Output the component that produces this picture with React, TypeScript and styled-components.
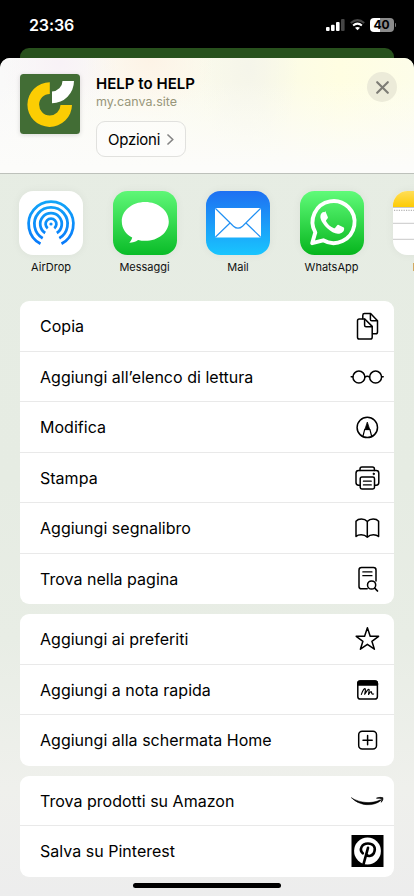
import React from "react";
import styled, { createGlobalStyle } from "styled-components";

const GlobalStyle = createGlobalStyle`
  * { box-sizing: border-box; }
  html, body { margin: 0; padding: 0; background: #000; overflow: hidden; }
  body { font-family: Inter, "Liberation Sans", sans-serif; color: #000; }
  button { font: inherit; color: inherit; }
`;

const Screen = styled.div`
  width: 414px;
  height: 896px;
  overflow: hidden;
  background: #000;
  display: flex;
  flex-direction: column;
`;

const StatusBar = styled.div`
  height: 48px;
  flex: none;
  display: flex;
  align-items: center;
  justify-content: space-between;
  padding: 2px 18px 0 29px;
  color: #fff;
`;

const Clock = styled.div`
  font-size: 16px;
  font-weight: 600;
  line-height: 20px;
  letter-spacing: -0.1px;
`;

const StatusIcons = styled.div`
  display: flex;
  align-items: center;
  gap: 5px;
`;

const Battery = styled.div`
  display: flex;
  align-items: center;
  gap: 1px;
`;

const BatteryBody = styled.div<{ $level: number }>`
  width: 24px;
  height: 14px;
  border-radius: 4px;
  background: linear-gradient(90deg, #fff ${(p) => p.$level}%, #8b8b8b ${(p) => p.$level}%);
  color: #000;
  font-size: 12px;
  font-weight: 700;
  line-height: 14px;
  text-align: center;
`;

const BatteryCap = styled.div`
  width: 1.4px;
  height: 4px;
  border-radius: 0 2px 2px 0;
  background: #777;
`;

const PageBehind = styled.div`
  height: 10px;
  flex: none;
  margin: 0 20px;
  border-radius: 9px 9px 0 0;
  background: #28511d;
`;

const Sheet = styled.div`
  flex: 1;
  display: flex;
  flex-direction: column;
  border-radius: 10px 10px 0 0;
  overflow: hidden;
  background: linear-gradient(180deg, #e7ede4 0, #e6ece3 420px, #e8ede5 580px, #eff0ec 730px, #ededed 838px);
`;

const Header = styled.header`
  height: 116px;
  flex: none;
  display: flex;
  align-items: flex-start;
  padding: 16px 17px 0 20px;
  border-bottom: 1px solid #bdc1bb;
  background:
    linear-gradient(180deg, rgba(252, 252, 250, 0) 20%, #fcfcfa 95%),
    radial-gradient(circle at 150px 0, #fdf3e6 0, rgba(253, 243, 230, 0) 65px),
    radial-gradient(circle at 60px 5px, #f8f2f7 0, rgba(248, 242, 247, 0) 60px),
    radial-gradient(ellipse 50px 90px at 248px 10px, #f5f5ea 0, rgba(245, 245, 234, 0) 100%),
    linear-gradient(90deg, #f9f9f9 0, #fcfbf2 35%, #fafae9 60%, #fffee2 82%, #fdfde9 100%);
`;

const SiteIcon = styled.svg`
  width: 60px;
  height: 60px;
  flex: none;
  border-radius: 3.5px;
  box-shadow: 0 1px 5px rgba(0, 0, 0, 0.14);
`;

const SiteInfo = styled.div`
  flex: 1;
  margin-left: 16px;
`;

const SiteTitle = styled.h1`
  margin: 0;
  font-size: 15px;
  font-weight: 600;
  line-height: 19px;
  letter-spacing: 0.02px;
`;

const SiteUrl = styled.div`
  font-size: 12.5px;
  line-height: 18px;
  color: #98967a;
  letter-spacing: 0.03px;
`;

const OptionsButton = styled.button`
  margin-top: 10px;
  width: 89.5px;
  height: 36px;
  padding: 0 0 0 11px;
  display: flex;
  align-items: center;
  gap: 7px;
  border: 1px solid #e1e1de;
  border-radius: 9px;
  background: rgba(255, 255, 255, 0.4);
  font-size: 15px;
  letter-spacing: -0.25px;
`;

const CloseButton = styled.button`
  width: 30px;
  height: 30px;
  margin-top: -2px;
  padding: 0;
  border: 0;
  border-radius: 50%;
  background: #ecebd9;
  display: grid;
  place-items: center;
`;

const AppStrip = styled.div`
  flex: none;
  height: 127px;
  display: flex;
  padding: 17px 0 0 4.3px;
  overflow: hidden;
`;

const AppItem = styled.div`
  flex: 0 0 93.5px;
  display: flex;
  flex-direction: column;
  align-items: center;
`;

const AppIcon = styled.svg`
  width: 64px;
  height: 64px;
  border-radius: 14.5px;
  box-shadow: 0 0 10px rgba(0, 0, 0, 0.05);
`;

const AppLabel = styled.div`
  margin-top: 5px;
  font-size: 11px;
  line-height: 14px;
  color: #111;
`;

const ActionList = styled.ul`
  flex: none;
  list-style: none;
  margin: 0 20px 10px;
  padding: 0;
  border-radius: 9px;
  overflow: hidden;
  background: #fff;
`;

const ActionRow = styled.li`
  height: 50.5px;
  padding: 0 10px 0 20px;
  display: flex;
  align-items: center;
  justify-content: space-between;
  &:not(:last-child) { box-shadow: inset 0 -1px 0 #e9e9e9; }
`;

const ActionLabel = styled.span`
  font-size: 16px;
  line-height: 20px;
  white-space: nowrap;
  letter-spacing: 0.02px;
`;

const ActionIcon = styled.svg`
  width: 34px;
  height: 34px;
  flex: none;
  fill: none;
  stroke: #000;
  stroke-width: 1.5;
  stroke-linecap: round;
  stroke-linejoin: round;
`;

const HomeIndicator = styled.div`
  flex: none;
  align-self: center;
  width: 148px;
  height: 5px;
  margin-top: -4px;
  border-radius: 3px;
  background: #000;
`;

const apps = [
  {
    name: "AirDrop",
    art: (
      <>
        <defs>
          <linearGradient id="air" x1="0" y1="10" x2="0" y2="54" gradientUnits="userSpaceOnUse">
            <stop offset="0" stopColor="#12a5f8" />
            <stop offset="1" stopColor="#0879fb" />
          </linearGradient>
        </defs>
        <rect width="64" height="64" fill="#fff" />
        <circle cx="32" cy="33" r="1.6" fill="#0e8ffa" />
        <g fill="none" stroke="url(#air)" strokeWidth="2.75">
          <path d="M28.7 37.3A5.4 5.4 0 1 1 35.3 37.3" />
          <path d="M26.2 42A10.8 10.8 0 1 1 37.8 42" />
          <path d="M23.7 47.3A16.6 16.6 0 1 1 40.3 47.3" />
          <path d="M21.5 52.8A22.4 22.4 0 1 1 42.5 52.8" />
        </g>
      </>
    ),
  },
  {
    name: "Messaggi",
    art: (
      <>
        <defs>
          <linearGradient id="msg" x1="0" y1="0" x2="0" y2="1">
            <stop offset="0" stopColor="#5ff777" />
            <stop offset="1" stopColor="#0abc28" />
          </linearGradient>
        </defs>
        <rect width="64" height="64" fill="url(#msg)" />
        <path
          d="M32.2 11C19.1 11 8.8 19.6 8.8 30.4c0 6.9 4.1 12.8 10.4 16.2-.5 2-1.4 3.7-2.9 5.2 3.3-.2 6.4-1.2 8.8-2.9 2.2.6 4.6.9 7.1.9 13 0 23.6-8.6 23.6-19.4S45.2 11 32.2 11z"
          fill="#fff"
        />
      </>
    ),
  },
  {
    name: "Mail",
    art: (
      <>
        <defs>
          <linearGradient id="mail" x1="0" y1="0" x2="0" y2="1">
            <stop offset="0" stopColor="#1e70f2" />
            <stop offset="1" stopColor="#19c5fe" />
          </linearGradient>
        </defs>
        <rect width="64" height="64" fill="url(#mail)" />
        <rect x="9" y="17" width="46" height="29.5" rx="1.5" fill="#fff" />
        <g fill="none" stroke="#2291f3" strokeWidth="1.2">
          <path d="M9.5 17.5 27.5 35.2Q32 39.2 36.5 35.2L54.5 17.5" />
          <path d="M9.5 46 24 32M54.5 46 40 32" />
        </g>
      </>
    ),
  },
  {
    name: "WhatsApp",
    art: (
      <>
        <defs>
          <linearGradient id="wa" x1="0" y1="0" x2="0" y2="1">
            <stop offset="0" stopColor="#60fb79" />
            <stop offset="1" stopColor="#06b51d" />
          </linearGradient>
        </defs>
        <rect width="64" height="64" fill="url(#wa)" />
        <path
          d="M12.2 52.2 15.3 41.4A21 21 0 1 1 23.2 49.3z"
          fill="none"
          stroke="#fff"
          strokeWidth="3.9"
          strokeLinejoin="round"
        />
        <path
          d="M24.7 21.2c-.5-.5-1.8-.4-2.5.3-1.3 1.2-2 2.8-1.8 5 .4 3.4 3.7 7.8 7.1 11 3.3 3 7.4 5.4 10.8 5.2 2.4-.1 5.3-1.7 5.7-3.8.2-1 .3-1.9-.2-2.3l-5.2-2.6c-.7-.3-1.1-.1-1.6.4l-2 2.5c-.4.5-.8.5-1.5.2-3.4-1.5-5.9-4-7.4-6.8-.3-.5-.2-.9.2-1.3l1.4-1.8c.3-.5.3-.8.1-1.3l-2.3-5.3c-.2-.4-.5-.5-.8.6z"
          fill="#fff"
        />
      </>
    ),
  },
  {
    name: "Note",
    art: (
      <>
        <defs>
          <linearGradient id="note" x1="0" y1="0" x2="0" y2="1">
            <stop offset="0" stopColor="#ffde59" />
            <stop offset="1" stopColor="#fdcb05" />
          </linearGradient>
        </defs>
        <rect width="64" height="64" fill="#fff" />
        <rect width="64" height="16" fill="url(#note)" />
        <path d="M0 16.5H64M0 32.3H64M0 48.3H64" stroke="#c9c9c9" strokeWidth="1" />
        <path d="M1 19.3H64" stroke="#b5b5b5" strokeWidth="1.2" strokeDasharray="1.2 1.2" />
      </>
    ),
  },
];

interface Action {
  label: string;
  icon: React.ReactNode;
}

const actionGroups: Action[][] = [
  [
    {
      label: "Copia",
      icon: (
        <>
          <path d="M-4.2-7.2V-10.8Q-4.2-12.5-2.5-12.5H3.6L10.5-5.2V6Q10.5 7.8 8.8 7.8H5.6" />
          <path d="M3.4-12.3V-6.6Q3.4-5.2 4.8-5.2H10.2" />
          <path d="M-7.7-7H-2.2L5.2.4V11.2Q5.2 13 3.4 13H-7.7Q-9.5 13-9.5 11.2V-5.2Q-9.5-7-7.7-7z" />
          <path d="M-2.4-6.8V-.8Q-2.4.7-1 .7H5" />
        </>
      ),
    },
    {
      label: "Aggiungi all’elenco di lettura",
      icon: (
        <>
          <circle cx="-8.1" cy=".1" r="6" />
          <circle cx="8.6" cy=".1" r="6" />
          <path d="M-2.1 0Q.3-1.4 2.6 0M-14.1-.2H-15.8M14.6-.2H16.2" />
        </>
      ),
    },
    {
      label: "Modifica",
      icon: (
        <>
          <circle cx=".3" cy=".4" r="10.2" />
          <path d="M-4.1 9.5-2.3 2.3H2.9L4.7 9.5" strokeWidth="1.2" />
          <path d="M-2.1 2.3.3-5 2.7 2.3z" fill="#000" strokeWidth=".7" />
        </>
      ),
    },
    {
      label: "Stampa",
      icon: (
        <>
          <path d="M-7-7.5V-9Q-7-11-5-11H5.4Q7.4-11 7.4-9V-7.5" />
          <path d="M-7 7.2H-8.4Q-11 7.2-11 4.6V-4.8Q-11-7.5-8.4-7.5H9.2Q11.8-7.5 11.8-4.8V4.6Q11.8 7.2 9.2 7.2H7.6" />
          <rect x="-6.8" y="-.9" width="14.3" height="11.9" rx="1.7" />
          <path d="M-3.6 3.2H4.3M-3.6 6.9H4.3" strokeWidth="1.2" />
          <circle cx="6.7" cy="-4.1" r=".8" fill="#000" strokeWidth=".7" />
        </>
      ),
    },
    {
      label: "Aggiungi segnalibro",
      icon: (
        <path d="M.3-6.6Q-1.8-9-5.6-9-9.1-9-11-6.8V8.5Q-9.2 6.8-5.8 6.8-2 6.8.3 9.2 2.6 6.8 6.4 6.8 9.6 6.8 11.6 8.5V-6.8Q9.7-9 6.2-9 2.4-9 .3-6.6zV9.2" />
      ),
    },
    {
      label: "Trova nella pagina",
      icon: (
        <>
          <path d="M.2 9.8H-5.5Q-8 9.8-8 7.4V-8.9Q-8-11.4-5.5-11.4H6.5Q9-11.4 9-8.9V2.1" />
          <path d="M-4.2-7.1H5M-4.2-3.3H5" strokeWidth="1.2" />
          <circle cx="4.6" cy="6" r="4.1" />
          <path d="M7.7 9.1 10.5 12" strokeWidth="1.7" />
        </>
      ),
    },
  ],
  [
    {
      label: "Aggiungi ai preferiti",
      icon: (
        <path d="M.4-11.2 3.2-2.7H11.6L4.9 2.3 7.4 10.2.4 5.3-6.6 10.2-4.1 2.3-10.8-2.7H-2.4z" />
      ),
    },
    {
      label: "Aggiungi a nota rapida",
      icon: (
        <>
          <rect x="-9.2" y="-9" width="19.6" height="18" rx="2.6" />
          <path d="M-9.2-4.9V-6.6Q-9.2-9-6.6-9H7.8Q10.4-9 10.4-6.6V-4.9z" fill="#000" />
          <path
            d="M-5.6 4.4C-4-.2-2.6-1.6-1.8-1.3-1 .1-2.2 2.6-2.3 4.3-.3.9 1.3-1 2-.6 2.7.3 1.5 2.6 1.6 4.4 2.8 2.4 3.7 1.4 4.3 1.7 4.9 2.6 4.2 4.6 6.6 4"
            strokeWidth="1.15"
          />
        </>
      ),
    },
    {
      label: "Aggiungi alla schermata Home",
      icon: (
        <>
          <rect x="-8.3" y="-8.7" width="17.8" height="17.8" rx="3.5" />
          <path d="M-4 .2H5.2M.6-4.4V4.8" />
        </>
      ),
    },
  ],
  [
    {
      label: "Trova prodotti su Amazon",
      icon: (
        <>
          <path d="M-15.4-3.1C-7 2.2 5 3.2 13.3-1.2L14-.6C6 6-7.5 5-15.4-3.1z" fill="#000" strokeWidth=".5" />
          <path d="M9.9-2.9Q13.3-4.3 15.9-3.3 16.4-1.4 14.3 1.3 15-.8 14.6-2.2 12.8-2.9 9.9-2.9z" fill="#000" strokeWidth=".7" />
        </>
      ),
    },
    {
      label: "Salva su Pinterest",
      icon: (
        <>
          <rect x="-15.5" y="-16" width="32" height="32" fill="#000" stroke="none" />
          <circle cx=".5" cy="0" r="13.4" fill="#fff" stroke="none" />
          <path d="M-4.2 2.3C-8.2-1.4-5.2-7.5 1-7.5 6.2-7.5 8.7-4.2 7.5.2 6.2 5.6.7 6.3-.6 3M1-3.2-3.4 12.9" strokeWidth="2.6" />
        </>
      ),
    },
  ],
];

export default function App() {
  return (
    <>
      <GlobalStyle />
      <Screen>
        <StatusBar>
          <Clock>23:36</Clock>
          <StatusIcons>
            <svg width="19" height="12" viewBox="0 0 19 12">
              <rect x="0" y="8" width="3.6" height="4" rx="1" fill="#fff" />
              <rect x="5" y="5.8" width="3.6" height="6.2" rx="1" fill="#fff" />
              <rect x="10" y="3" width="3.6" height="9" rx="1" fill="#fff" />
              <rect x="15" y="0" width="3.6" height="12" rx="1" fill="#454545" />
            </svg>
            <svg width="15" height="12" viewBox="0 0 15 12" fill="none" strokeWidth="2">
              <path d="M.8 4Q7.5-1.8 14.2 4" stroke="#464646" />
              <path d="M3.1 6.5Q7.5 2.8 11.9 6.5" stroke="#fff" />
              <path d="M7.5 11.3 5 8.8Q7.5 7 10 8.8z" fill="#fff" />
            </svg>
            <Battery>
              <BatteryBody $level={40}>40</BatteryBody>
              <BatteryCap />
            </Battery>
          </StatusIcons>
        </StatusBar>
        <PageBehind />
        <Sheet>
          <Header>
            <SiteIcon viewBox="0 0 60 60">
              <rect width="60" height="60" fill="#426d35" />
              <path
                d="M29.8 8.3A22.3 22.3 0 1 0 52 31H40.5A10.7 10.7 0 1 1 29.8 20z"
                fill="#fccd03"
              />
              <path d="M42.5 7H54A22.3 22.3 0 0 1 32 29.3V17.5A10.7 10.7 0 0 0 42.5 7z" fill="#fff" />
            </SiteIcon>
            <SiteInfo>
              <SiteTitle>HELP to HELP</SiteTitle>
              <SiteUrl>my.canva.site</SiteUrl>
              <OptionsButton>
                Opzioni
                <svg width="7" height="11" viewBox="0 0 7 11" fill="none" stroke="#858585" strokeWidth="1.7" strokeLinecap="round" strokeLinejoin="round">
                  <path d="M1 1 5.8 5.5 1 10" />
                </svg>
              </OptionsButton>
            </SiteInfo>
            <CloseButton aria-label="Chiudi">
              <svg width="13" height="13" viewBox="0 0 13 13" stroke="#7d7c75" strokeWidth="2.1" strokeLinecap="round">
                <path d="M1.2 1.2 11.8 11.8M11.8 1.2 1.2 11.8" />
              </svg>
            </CloseButton>
          </Header>
          <AppStrip>
            {apps.map((app) => (
              <AppItem key={app.name}>
                <AppIcon viewBox="0 0 64 64">{app.art}</AppIcon>
                <AppLabel>{app.name}</AppLabel>
              </AppItem>
            ))}
          </AppStrip>
          {actionGroups.map((group, i) => (
            <ActionList key={i}>
              {group.map((action) => (
                <ActionRow key={action.label}>
                  <ActionLabel>{action.label}</ActionLabel>
                  <ActionIcon viewBox="-17 -17 34 34">{action.icon}</ActionIcon>
                </ActionRow>
              ))}
            </ActionList>
          ))}
          <HomeIndicator />
        </Sheet>
      </Screen>
    </>
  );
}
